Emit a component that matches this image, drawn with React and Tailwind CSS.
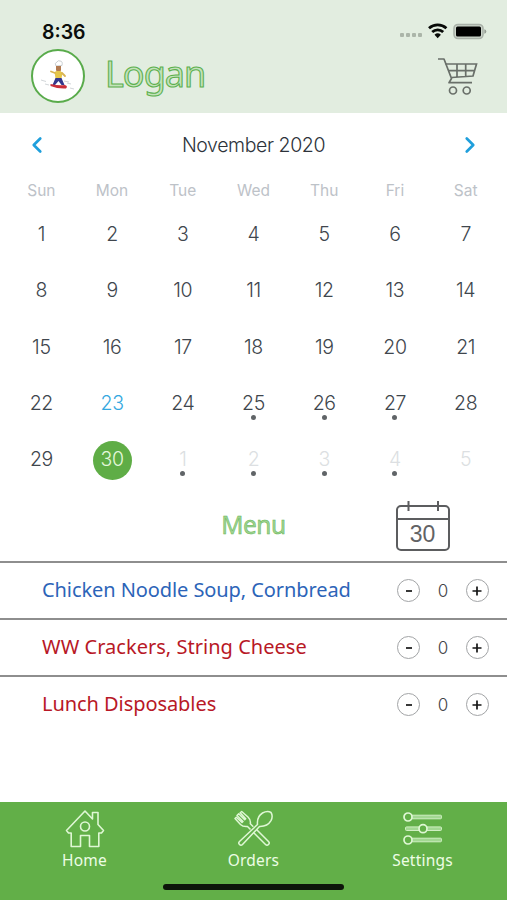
import { ChevronLeft, ChevronRight } from 'lucide-react'

const weekdays = ['Sun', 'Mon', 'Tue', 'Wed', 'Thu', 'Fri', 'Sat']

const days = [
    ...Array.from({ length: 30 }, (_, i) => ({
        day: i + 1,
        today: i + 1 === 23,
        selected: i + 1 === 30,
        dot: [25, 26, 27].includes(i + 1),
    })),
    ...Array.from({ length: 5 }, (_, i) => ({ day: i + 1, next: true, dot: i < 4 })),
]

const menu = [
    { name: 'Chicken Noodle Soup, Cornbread', color: 'text-[#2c64b8]', spacing: 'tracking-[-0.08px]' },
    { name: 'WW Crackers, String Cheese', color: 'text-[#b81826]', spacing: 'tracking-[0.03px]' },
    { name: 'Lunch Disposables', color: 'text-[#b81826]', spacing: 'tracking-[-0.06px]' },
]

function dayColor(d) {
    if (d.next) return 'text-[#dcdfe2]'
    if (d.selected) return 'text-[#e4f7dc]'
    if (d.today) return 'text-[#35a8e0]'
    return 'text-[#40464d]'
}

function StatusIcons() {
    return (
        <svg width="88" height="20" viewBox="0 0 88 20">
            <g fill="#abb5a9">
                <rect x="1" y="12" width="4" height="4" rx="1" />
                <rect x="7" y="12" width="4" height="4" rx="1" />
                <rect x="13" y="12" width="4" height="4" rx="1" />
                <rect x="19" y="12" width="4" height="4" rx="1" />
            </g>
            <g fill="none" stroke="#080a08" strokeWidth="2.8">
                <path d="M30 7.2a13 13 0 0 1 17.4 0" />
                <path d="M33.2 11a8 8 0 0 1 11 0" />
            </g>
            <path d="M35.5 13.7a4.7 4.7 0 0 1 6.4 0l-3.2 3.5z" fill="#080a08" />
            <rect x="55" y="3.500" width="29" height="14" rx="4" fill="#cdd6cb" stroke="#a9b1a8" strokeWidth="1.6" />
            <rect x="57" y="5.500" width="25" height="10" rx="1.500" fill="#000" />
            <path d="M85.3 8.2q2 .6 2 2.3t-2 2.3z" fill="#959d94" />
        </svg>
    )
}

function Snowboarder() {
    return (
        <svg width="36" height="32" viewBox="0 0 36 32">
            <path d="M1 20l5 1.500M5 24l4 1M24 21l5 1M27 23l4 1M30 28l4 1" fill="none" stroke="#d2d6d9" />
            <path d="M16 6q-2-3 1-4 1-2 3-1 3 0 2 4.500z" fill="#fff" stroke="#bdc3c6" strokeWidth=".8" />
            <path d="M16 6h5v4.500q-2 2-5 0z" fill="#b27a50" />
            <path d="M14.500 12l2-1h4l2 2-1 5.500h-6z" fill="#e5c64b" />
            <path d="M15 13l-4-1.500M22 13l3 3" stroke="#d9b454" strokeWidth="1.800" strokeLinecap="round" />
            <path d="M15.500 18h6l3 7h-3l-3-4-3.500 4h-2.500z" fill="#35388d" />
            <path d="M10.500 24q9 2 14 1 4 1 1.500 3.500-8 .5-15.500-2.500z" fill="#c92f3a" />
        </svg>
    )
}

function CartIcon() {
    return (
        <svg width="42" height="40" viewBox="0 0 42 40" fill="none" stroke="#696f69" strokeWidth="1.7">
            <path d="M1 2h6l7.500 19.500L12 25.700h23" strokeLinejoin="round" />
            <path d="M8.500 7h31l-3.500 12-21.500 1.500M11.500 13.700h26.200M20 7v13M28.700 7v12.500" />
            <circle cx="16" cy="33.500" r="3.500" />
            <circle cx="29.700" cy="33.500" r="3.500" />
        </svg>
    )
}

function CalendarIcon() {
    return (
        <div className="relative h-[50px] w-[54px]">
            <svg width="54" height="50" viewBox="0 0 54 50" fill="none" stroke="#5c5d5f" strokeWidth="2">
                <rect x="1" y="5" width="52" height="44" rx="4" />
                <path d="M1 18h52M12.500 0v10M42 0v10" />
            </svg>
            <span className="absolute inset-x-0 top-[20px] text-center font-['Liberation_Sans',sans-serif] text-[23px] leading-[26px] text-[#626365]">30</span>
        </div>
    )
}

function HomeIcon() {
    return (
        <svg width="40" height="40" viewBox="0 0 40 40" fill="none" stroke="#dff7d4" strokeWidth="1.6" strokeLinejoin="round">
            <path d="M20 2L1.500 21.500l2 2.500h2.700v13.500h9.300v-11h9v11h9.300V24h2.700l2-2.500-5.500-6V3.500h-5.500v6.500z" />
            <circle cx="20" cy="17.500" r="4.500" />
        </svg>
    )
}

function OrdersIcon() {
    return (
        <svg width="40" height="40" viewBox="0 0 40 40" fill="none" stroke="#dff7d4" strokeWidth="1.5" strokeLinejoin="round">
            {/* spoon */}
            <path d="M25.500 17.500L8.500 35.500q-1.500 1.500-3 0t0-3L23.500 15.500q-.8-8 5-11.500 5-2.700 8.500-.5 2.300 3.500 0 8.200-3.500 6-11.500 5.800z" />
            {/* fork */}
            <path d="M22.500 20.500l12 12q1.500 1.500 0 3t-3 0L19.500 23.500" />
            <path d="M16.500 20.500L13.500 17.500Q9 18 6.500 15.500L1 9.500 2.300 8.200 8 13.500 9 12.500 3 6.500 4.700 4.800 10.700 10.800 11.700 9.800 6.200 3.800 7.700 2.500 14 8q3 3 2.300 6.700l3 3" />
        </svg>
    )
}

function SettingsIcon() {
    return (
        <svg width="40" height="34" viewBox="0 0 40 34">
            <g fill="#a2d892" stroke="#d0efc3" strokeWidth="1">
                <rect x="8" y="3.200" width="30.500" height="3.600" rx="1" />
                <rect x="2.500" y="14.900" width="36" height="3.600" rx="1" />
                <rect x="8" y="26.200" width="30.500" height="3.600" rx="1" />
            </g>
            <g fill="#62af48" stroke="#dff7d4" strokeWidth="1.700">
                <circle cx="5" cy="5" r="4" />
                <circle cx="20" cy="16.700" r="4" />
                <circle cx="5" cy="28" r="4" />
            </g>
        </svg>
    )
}

const tabs = [
    { label: 'Home', icon: <HomeIcon /> },
    { label: 'Orders', icon: <OrdersIcon /> },
    { label: 'Settings', icon: <SettingsIcon /> },
]

function RoundButton({ plus }) {
    return (
        <button className="flex size-[23px] items-center justify-center rounded-full border border-[#a2a4a6]" aria-label={plus ? 'Add' : 'Remove'}>
            <svg width="10" height="10" viewBox="0 0 10 10" stroke="#151515" strokeWidth="1.700">
                <path d={plus ? 'M.5 5h9M5 .5v9' : 'M2 5h6'} />
            </svg>
        </button>
    )
}

export default function App() {
    return (
        <div className="flex h-[900px] w-[507px] flex-col overflow-hidden bg-white font-['Inter',sans-serif]">
            {/* Header */}
            <header className="h-[113px] bg-[#e2ede0]">
                <div className="flex h-[49px] items-end justify-between pr-[20px] pl-[42px]">
                    <span className="mb-[5px] text-[19.500px] leading-6 font-semibold text-[#0b0d0b]">8:36</span>
                    <div className="mb-[8px]">
                        <StatusIcons />
                    </div>
                </div>
                <div className="flex pr-[28px] pl-[31px]">
                    <div className="flex size-[54px] items-center justify-center rounded-full border-[2.500px] border-[#59ab4b] bg-white">
                        <Snowboarder />
                    </div>
                    <h1 className="mt-[2px] ml-[20px] font-['Noto_Sans',sans-serif] text-[36px] leading-[46px] tracking-[-1px] text-[#c3e2bb] [-webkit-text-stroke:1.1px_#5cb04e]">
                        Logan
                    </h1>
                    <div className="mt-[8px] ml-auto">
                        <CartIcon />
                    </div>
                </div>
            </header>

            {/* Calendar */}
            <section className="px-1.5">
                <div className="flex h-[64px] items-center justify-between px-[18px]">
                    <ChevronLeft size={26} strokeWidth={2.5} className="text-[#1f9fdc]" />
                    <h2 className="pt-[2px] text-[19.500px] font-[350] tracking-[-0.4px] text-[#2d333a]">November 2020</h2>
                    <ChevronRight size={26} strokeWidth={2.5} className="text-[#1f9fdc]" />
                </div>
                <div className="grid h-[28px] grid-cols-7 items-center text-center text-[15.500px] text-[#bdc2c8]">
                    {weekdays.map((w) => (
                        <span key={w}>{w}</span>
                    ))}
                </div>
                <div className="grid auto-rows-[56.250px] grid-cols-7 text-center">
                    {days.map((d, i) => (
                        <div key={i} className="flex flex-col items-center pt-[11px]">
                            <div
                                className={`flex h-[39px] w-[39px] items-start justify-center rounded-full pt-[5px] text-[19.500px] leading-[26px] tracking-[-0.4px] ${d.next ? 'font-light' : 'font-[350]'} ${dayColor(d)} ${d.selected ? 'bg-[#5fad46]' : ''}`}
                            >
                                {d.day}
                            </div>
                            {d.dot && <span className="-mt-[9px] size-[5px] shrink-0 rounded-full bg-[#606467]" />}
                        </div>
                    ))}
                </div>
            </section>

            {/* Menu */}
            <div className="grid grow-0 basis-[75px] grid-cols-3 items-center">
                <h2 className="col-start-2 pt-[2px] text-center font-['Noto_Sans',sans-serif] text-[24.500px] leading-[32px] tracking-[-0.5px] text-[#9fd391] [-webkit-text-stroke:0.5px_#63b552]">
                    Menu
                </h2>
                <div className="justify-self-center pt-[4px]">
                    <CalendarIcon />
                </div>
            </div>
            <ul className="grow">
                {menu.map((m) => (
                    <li key={m.name} className="flex h-[57px] items-center border-t-2 border-[#8e8e8e] pr-[18px] pl-[42px]">
                        <span className={`grow pb-[1px] font-['Noto_Sans',sans-serif] text-[20px] whitespace-nowrap ${m.color} ${m.spacing}`}>{m.name}</span>
                        <div className="flex w-[92px] items-center justify-between">
                            <RoundButton />
                            <span className="pt-[2px] text-[17px] font-[350] text-[#3f4347]">0</span>
                            <RoundButton plus />
                        </div>
                    </li>
                ))}
            </ul>

            {/* Tab bar */}
            <nav className="relative grid h-[98px] grid-cols-3 bg-[#62af48]">
                {tabs.map((t) => (
                    <div key={t.label} className="flex flex-col items-center pt-[7px]">
                        <div className="flex h-[40px] items-center">{t.icon}</div>
                        <span className="font-['Noto_Sans',sans-serif] text-[15.500px] leading-[22px] tracking-[0.2px] text-[#edfde5]">{t.label}</span>
                    </div>
                ))}
                <div className="absolute bottom-[10px] left-[163px] h-[6px] w-[181px] rounded-full bg-[#0d150a]" />
            </nav>
        </div>
    )
}
